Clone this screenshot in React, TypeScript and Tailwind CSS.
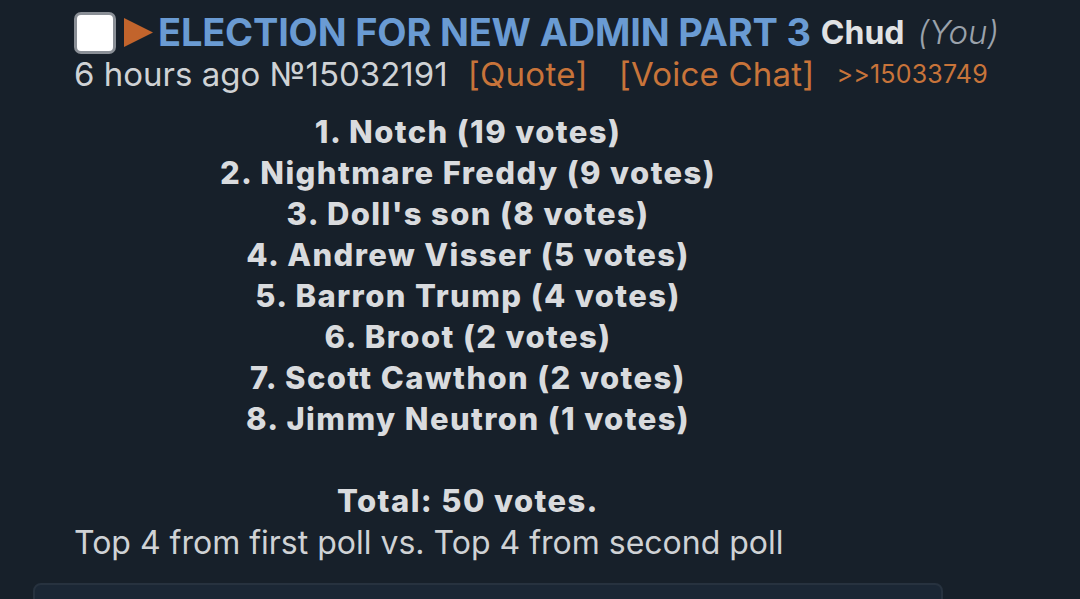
const results = [
  '1. Notch (19 votes)',
  '2. Nightmare Freddy (9 votes)',
  "3. Doll's son (8 votes)",
  '4. Andrew Visser (5 votes)',
  '5. Barron Trump (4 votes)',
  '6. Broot (2 votes)',
  '7. Scott Cawthon (2 votes)',
  '8. Jimmy Neutron (1 votes)',
]

export default function App() {
  return (
    <div className="w-[1080px] h-[599px] overflow-hidden bg-[#17202a] font-['Inter',sans-serif]">
      <div className="pl-[74px] pt-[11px] w-[862px]">
        <div className="flex items-center h-[43px]">
          <div className="w-[42px] h-[42px] rounded-[7px] bg-white border-[3px] border-[#8a8f96] shrink-0" />
          <svg className="ml-[8px] shrink-0" width="29" height="29" viewBox="0 0 29 29">
            <path d="M0 0 L29 14.5 L0 29 Z" fill="#c2642c" />
          </svg>
          <span className="ml-[5px] text-[38px] font-bold text-[#6a9bd3] tracking-[-0.2px] whitespace-nowrap">
            ELECTION FOR NEW ADMIN PART 3
          </span>
          <span className="ml-[10px] text-[32px] font-bold text-[#e0e2e4] whitespace-nowrap">Chud</span>
          <span className="ml-[13px] text-[33px] italic font-light text-[#9aa2ab] whitespace-nowrap">(You)</span>
        </div>
        <div className="flex items-center h-[42px] text-[33px] text-[#cfd2d5] whitespace-nowrap">
          <span>6 hours ago №15032191</span>
          <span className="ml-[20px] text-[#c8743a] tracking-[0.3px]">[Quote]</span>
          <span className="ml-[31px] text-[#c8743a] tracking-[0.2px]">[Voice Chat]</span>
          <span className="ml-[22px] text-[25px] text-[#c8743a] tracking-[0.2px]">&gt;&gt;15033749</span>
        </div>
        <div className="mt-[15px] text-center text-[31px] leading-[41px] font-extrabold tracking-[1.4px] text-[#d9dbde]">
          {results.map((r) => (
            <div key={r}>{r}</div>
          ))}
          <div className="h-[41px]" />
          <div>Total: 50 votes.</div>
        </div>
        <div className="mt-[1px] text-[32px] leading-[42px] text-[#cfd2d5] whitespace-nowrap">
          Top 4 from first poll vs. Top 4 from second poll
        </div>
      </div>
      <div className="ml-[33px] mt-[19px] w-[910px] h-[60px] rounded-[8px] bg-[#1b2735] border-2 border-[#27323f]" />
    </div>
  )
}
